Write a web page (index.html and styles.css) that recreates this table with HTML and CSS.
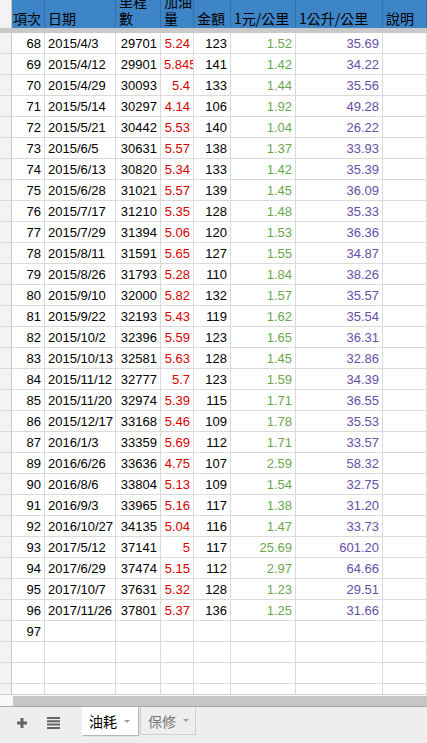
FILE: index.html
```html
<!DOCTYPE html>
<html>
<head>
<meta charset="utf-8">
<link rel="stylesheet" href="styles.css">
</head>
<body>
<div class="sheet">
  <div class="row head">
    <div class="g"></div>
    <div class="h h1">項次</div>
    <div class="h">日期</div>
    <div class="h">里程數</div>
    <div class="h">加油量</div>
    <div class="h">金額</div>
    <div class="h">1元/公里</div>
    <div class="h">1公升/公里</div>
    <div class="h">說明</div>
  </div>
  <div class="band"></div>
  <div id="rows"></div>
</div>
<div class="hscroll"><div class="track"></div></div>
<div class="tabbar">
  <svg class="plus" width="10" height="10" viewBox="0 0 10 10"><path d="M0 5H10M5 0V10" stroke="#666" stroke-width="3"/></svg>
  <svg class="menu" width="13" height="12" viewBox="0 0 13 12"><path d="M0 1H13M0 4.3H13M0 7.6H13M0 10.9H13" stroke="#666" stroke-width="2"/></svg>
  <div class="tab active"><span>油耗</span><i class="arrow"></i></div>
  <div class="tab"><span>保修</span><i class="arrow"></i></div>
</div>
<script src="app.js"></script>
</body>
</html>
```
FILE: app.js
```js
var data = [
["68","2015/4/3","29701","5.24","123","1.52","35.69"],
["69","2015/4/12","29901","5.845","141","1.42","34.22"],
["70","2015/4/29","30093","5.4","133","1.44","35.56"],
["71","2015/5/14","30297","4.14","106","1.92","49.28"],
["72","2015/5/21","30442","5.53","140","1.04","26.22"],
["73","2015/6/5","30631","5.57","138","1.37","33.93"],
["74","2015/6/13","30820","5.34","133","1.42","35.39"],
["75","2015/6/28","31021","5.57","139","1.45","36.09"],
["76","2015/7/17","31210","5.35","128","1.48","35.33"],
["77","2015/7/29","31394","5.06","120","1.53","36.36"],
["78","2015/8/11","31591","5.65","127","1.55","34.87"],
["79","2015/8/26","31793","5.28","110","1.84","38.26"],
["80","2015/9/10","32000","5.82","132","1.57","35.57"],
["81","2015/9/22","32193","5.43","119","1.62","35.54"],
["82","2015/10/2","32396","5.59","123","1.65","36.31"],
["83","2015/10/13","32581","5.63","128","1.45","32.86"],
["84","2015/11/12","32777","5.7","123","1.59","34.39"],
["85","2015/11/20","32974","5.39","115","1.71","36.55"],
["86","2015/12/17","33168","5.46","109","1.78","35.53"],
["87","2016/1/3","33359","5.69","112","1.71","33.57"],
["89","2016/6/26","33636","4.75","107","2.59","58.32"],
["90","2016/8/6","33804","5.13","109","1.54","32.75"],
["91","2016/9/3","33965","5.16","117","1.38","31.20"],
["92","2016/10/27","34135","5.04","116","1.47","33.73"],
["93","2017/5/12","37141","5","117","25.69","601.20"],
["94","2017/6/29","37474","5.15","112","2.97","64.66"],
["95","2017/10/7","37631","5.32","128","1.23","29.51"],
["96","2017/11/26","37801","5.37","136","1.25","31.66"],
["97","","","","","",""],
["","","","","","",""],
["","","","","","",""],
["","","","","","",""]
];
var cls = ["n","d","n","n red","n","n green","n purple","d"];
var host = document.getElementById("rows");
data.forEach(function (r) {
  var row = document.createElement("div");
  row.className = "row";
  var g = document.createElement("div");
  g.className = "g";
  row.appendChild(g);
  for (var i = 0; i < 8; i++) {
    var c = document.createElement("div");
    c.className = "c " + cls[i];
    c.textContent = r[i] || "";
    row.appendChild(c);
  }
  host.appendChild(row);
});
```
FILE: styles.css
```css
html, body {
  margin: 0;
  padding: 0;
}
body {
  width: 427px;
  height: 743px;
  overflow: hidden;
  background: #fff;
  font-family: "Liberation Sans", Arial, sans-serif;
  font-size: 13px;
  color: #000;
}
.sheet {
  height: 694px;
  overflow: hidden;
  border-bottom: 1px solid #d4d4d4;
}
.row {
  display: grid;
  grid-template-columns: 12px 33px 71px 45px 33px 37px 65px 87px 1fr;
  height: 21px;
}
.head {
  height: 28px;
}
.g {
  box-sizing: border-box;
  background: #f3f3f3;
  border-right: 1px solid #c6c6c6;
  border-bottom: 1px solid #dadada;
}
.head .g {
  border-bottom: none;
  background: #f3f3f3;
}
.h {
  box-sizing: border-box;
  background: #3d85c6;
  border-right: 1px solid #2f70ad;
  display: flex;
  align-items: flex-end;
  overflow: hidden;
  padding: 0 0 1px 3px;
  font-family: "Noto Sans CJK TC", "Noto Sans", sans-serif;
  font-size: 14px;
  line-height: 17px;
}
.h1 {
  padding-left: 1px;
}
.band {
  height: 5px;
  background: #c9c9c9;
}
.c {
  box-sizing: border-box;
  border-right: 1px solid #dadada;
  border-bottom: 1px solid #dadada;
  padding: 0 3px;
  line-height: 21px;
  white-space: nowrap;
  overflow: hidden;
}
.n {
  text-align: right;
}
.d {
  text-align: left;
}
.red {
  color: #d60000;
}
.green {
  color: #6aa84f;
}
.purple {
  color: #674ea7;
}
.hscroll {
  height: 11px;
  padding-top: 1px;
  box-sizing: border-box;
  background: #f8f8f8;
  display: flex;
}
.track {
  margin-left: 13px;
  flex: 1;
  height: 10px;
  background: #c6c6c6;
}
.tabbar {
  height: 37px;
  box-sizing: border-box;
  border-top: 1px solid #a8a8a8;
  background: #eeeeee;
  display: flex;
  align-items: flex-start;
}
.plus {
  margin: 11px 0 0 17px;
}
.menu {
  margin: 10px 0 0 20px;
}
.tab {
  box-sizing: border-box;
  height: 28px;
  width: 56px;
  display: flex;
  align-items: center;
  padding-left: 7px;
  font-family: "Noto Sans CJK TC", "Noto Sans", sans-serif;
  font-size: 14px;
  color: #777;
  border: 1px solid #cfcfcf;
  border-top: none;
  margin-left: 2px;
}
.tab.active {
  margin-left: 22px;
  background: #fff;
  color: #000;
  border: none;
  box-shadow: 1px 1px 1px #b5b5b5;
}
.arrow {
  width: 0;
  height: 0;
  border-left: 3.5px solid transparent;
  border-right: 3.5px solid transparent;
  border-top: 3.5px solid #9e9e9e;
  margin-left: 7px;
}
```
